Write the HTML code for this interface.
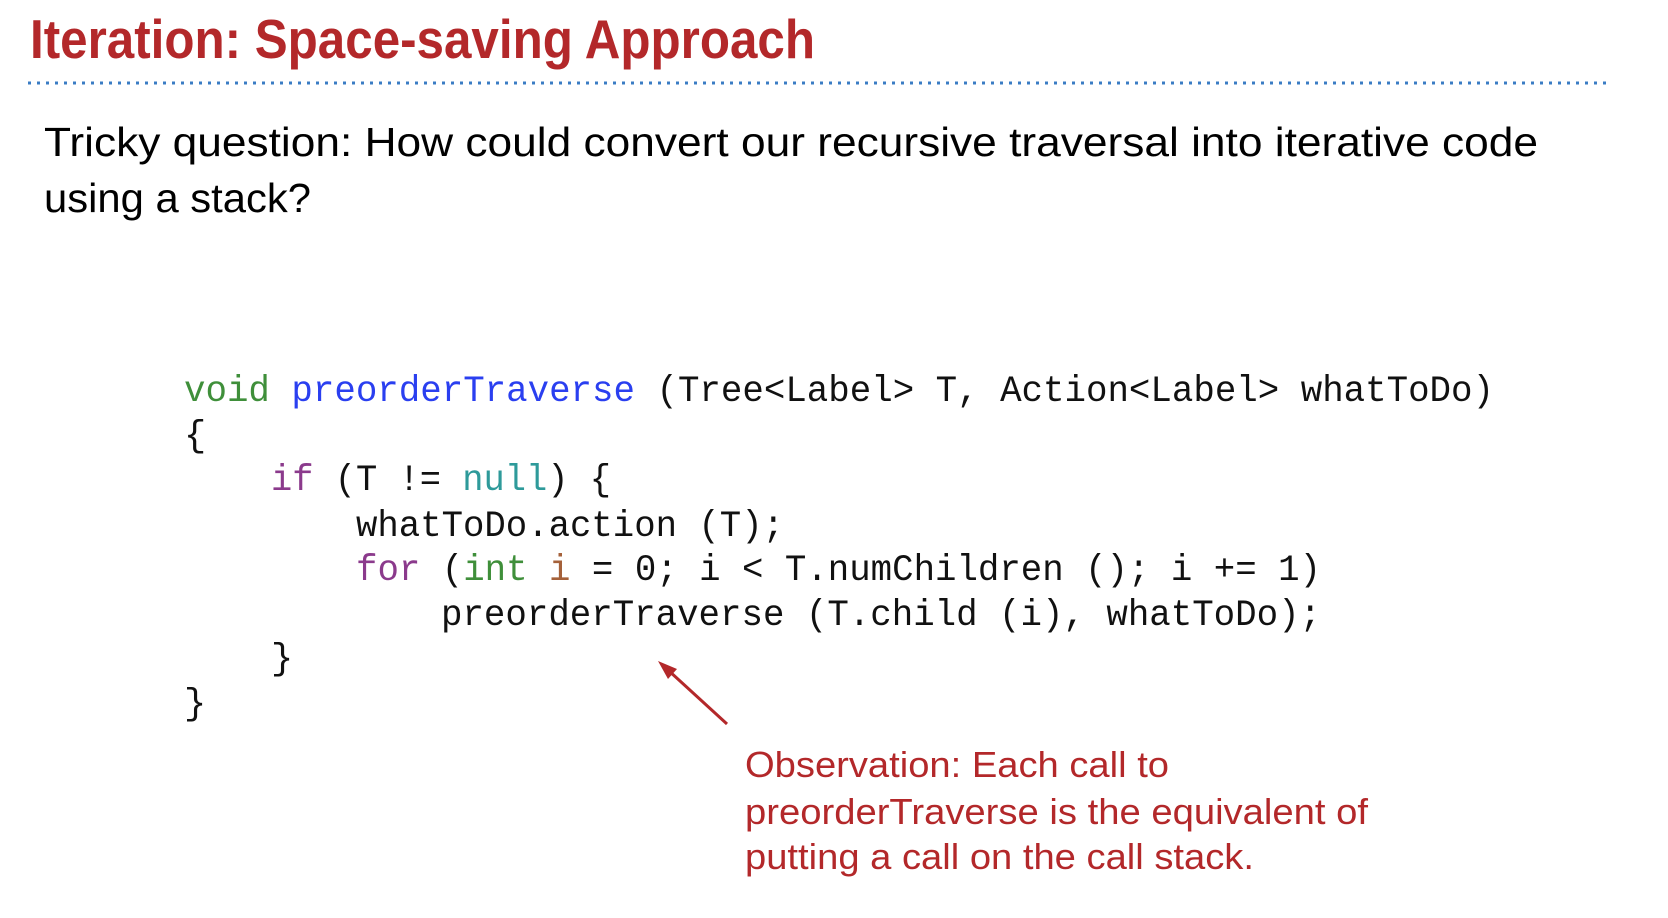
<!DOCTYPE html>
<html><head><meta charset="utf-8"><style>html,body{margin:0;padding:0;background:#fff;width:1668px;height:918px;overflow:hidden}</style></head>
<body>
<svg width="1668" height="918" viewBox="0 0 1668 918" xmlns="http://www.w3.org/2000/svg">
<text x="30" y="58" font-family="Liberation Sans, sans-serif" font-weight="bold" font-size="55" fill="#b3282a" textLength="785" lengthAdjust="spacingAndGlyphs">Iteration: Space-saving Approach</text>
<line x1="28" y1="83" x2="1606" y2="83" stroke="#3a7cc4" stroke-width="3" stroke-dasharray="3 6"/>
<g font-family="Liberation Sans, sans-serif" font-size="41" fill="#000">
<text x="44" y="156" textLength="1494" lengthAdjust="spacingAndGlyphs">Tricky question: How could convert our recursive traversal into iterative code</text>
<text x="44" y="212" textLength="267" lengthAdjust="spacingAndGlyphs">using a stack?</text>
</g>
<g font-family="Liberation Mono, monospace" font-size="37" fill="#111" xml:space="preserve">
<text x="184" y="401" textLength="1310" lengthAdjust="spacingAndGlyphs"><tspan fill="#3f8f3a">void</tspan> <tspan fill="#2a3ff0">preorderTraverse</tspan> (Tree&lt;Label&gt; T, Action&lt;Label&gt; whatToDo)</text>
<text x="184" y="446">{</text>
<text x="271" y="490" textLength="340" lengthAdjust="spacingAndGlyphs"><tspan fill="#8b3a8c">if</tspan> (T != <tspan fill="#2e9a9a">null</tspan>) {</text>
<text x="356" y="536" textLength="428" lengthAdjust="spacingAndGlyphs">whatToDo.action (T);</text>
<text x="356" y="580" textLength="965" lengthAdjust="spacingAndGlyphs"><tspan fill="#8b3a8c">for</tspan> (<tspan fill="#3f8f3a">int</tspan> <tspan fill="#a5613a">i</tspan> = 0; i &lt; T.numChildren (); i += 1)</text>
<text x="441" y="625" textLength="880" lengthAdjust="spacingAndGlyphs">preorderTraverse (T.child (i), whatToDo);</text>
<text x="271" y="669">}</text>
<text x="184" y="714">}</text>
</g>
<line x1="727" y1="724" x2="668" y2="670" stroke="#b3282a" stroke-width="3"/>
<polygon points="658,661 677,669 668,679" fill="#b3282a"/>
<g font-family="Liberation Sans, sans-serif" font-size="36" fill="#b3282a">
<text x="745" y="777" textLength="424" lengthAdjust="spacingAndGlyphs">Observation: Each call to</text>
<text x="745" y="824" textLength="623" lengthAdjust="spacingAndGlyphs">preorderTraverse is the equivalent of</text>
<text x="745" y="869" textLength="509" lengthAdjust="spacingAndGlyphs">putting a call on the call stack.</text>
</g>
</svg>
</body></html>
